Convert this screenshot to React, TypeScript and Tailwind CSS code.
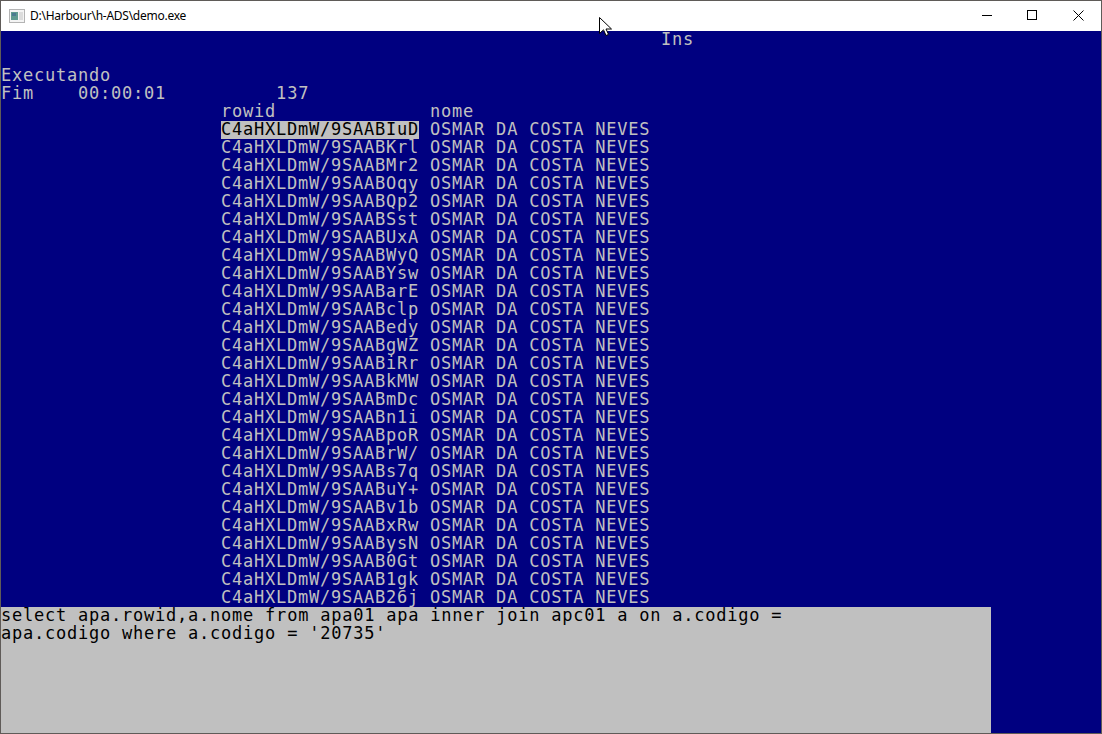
const rowIds = [
  'C4aHXLDmW/9SAABIuD',
  'C4aHXLDmW/9SAABKrl',
  'C4aHXLDmW/9SAABMr2',
  'C4aHXLDmW/9SAABOqy',
  'C4aHXLDmW/9SAABQp2',
  'C4aHXLDmW/9SAABSst',
  'C4aHXLDmW/9SAABUxA',
  'C4aHXLDmW/9SAABWyQ',
  'C4aHXLDmW/9SAABYsw',
  'C4aHXLDmW/9SAABarE',
  'C4aHXLDmW/9SAABclp',
  'C4aHXLDmW/9SAABedy',
  'C4aHXLDmW/9SAABgWZ',
  'C4aHXLDmW/9SAABiRr',
  'C4aHXLDmW/9SAABkMW',
  'C4aHXLDmW/9SAABmDc',
  'C4aHXLDmW/9SAABn1i',
  'C4aHXLDmW/9SAABpoR',
  'C4aHXLDmW/9SAABrW/',
  'C4aHXLDmW/9SAABs7q',
  'C4aHXLDmW/9SAABuY+',
  'C4aHXLDmW/9SAABv1b',
  'C4aHXLDmW/9SAABxRw',
  'C4aHXLDmW/9SAABysN',
  'C4aHXLDmW/9SAAB0Gt',
  'C4aHXLDmW/9SAAB1gk',
  'C4aHXLDmW/9SAAB26j',
];

function TitleBar() {
  return (
    <div className="flex h-[30px] items-center bg-white pl-[8px] text-black">
      <svg width="16" height="14" viewBox="0 0 16 14" className="mr-[5px]">
        <rect x="0.5" y="0.5" width="15" height="13" fill="#f4f4f4" stroke="#b4b4b4" />
        <rect x="2" y="3" width="7" height="8" fill="#5f9a90" />
        <rect x="3" y="4" width="4" height="3" fill="#4a7a90" />
        <rect x="10" y="3" width="4" height="8" fill="#dcdcdc" />
      </svg>
      <span className="font-['Noto_Sans',sans-serif] text-[12px] tracking-[-0.26px]">D:\Harbour\h-ADS\demo.exe</span>
      <div className="ml-auto flex h-full pb-[2px]">
        <button className="flex w-[44px] items-center justify-center">
          <svg width="10" height="10" viewBox="0 0 10 10"><path d="M0 5.5h10" stroke="#000" fill="none" /></svg>
        </button>
        <button className="flex w-[46px] items-center justify-center">
          <svg width="10" height="10" viewBox="0 0 10 10"><rect x="0.5" y="0.5" width="9" height="9" stroke="#000" fill="none" /></svg>
        </button>
        <button className="flex w-[46px] items-center justify-center">
          <svg width="11" height="11" viewBox="0 0 11 11"><path d="M0.5 0.5l10 10M10.5 0.5l-10 10" stroke="#000" fill="none" /></svg>
        </button>
      </div>
    </div>
  );
}

export default function App() {
  return (
    <div className="relative h-[734px] w-[1102px] overflow-hidden border border-[#5f5b58]">
      <TitleBar />

      {/* console buffer: fixed 11x18 character cells */}
      <div className="flex h-[702px] flex-col whitespace-pre bg-[#000080] font-['DejaVu_Sans_Mono',monospace] text-[17px] leading-[16px] tracking-[0.77px] text-[#c0c0c0]">
        <div className="h-[18px] shrink-0 pl-[660px]">Ins</div>
        <div className="h-[18px] shrink-0" />
        <div className="h-[18px] shrink-0">Executando</div>
        <div className="h-[18px] shrink-0">{'Fim    00:00:01          137'}</div>
        <div className="h-[18px] shrink-0 pl-[220px]">{'rowid              nome'}</div>
        {rowIds.map((id, i) => (
          <div key={id} className="flex h-[18px] shrink-0 pl-[220px]">
            <span className={i === 0 ? 'bg-[#c0c0c0] text-black' : ''}>{id}</span>
            <span className="pl-[11px]">OSMAR DA COSTA NEVES</span>
          </div>
        ))}
        <div className="h-[126px] w-[990px] shrink-0 bg-[#c0c0c0] text-black">
          <div className="h-[18px]">select apa.rowid,a.nome from apa01 apa inner join apc01 a on a.codigo =</div>
          <div className="h-[18px]">apa.codigo where a.codigo = '20735'</div>
        </div>
      </div>

      {/* mouse pointer sitting over the title bar */}
      <svg width="14" height="20" viewBox="0 0 14 20" className="absolute left-[598px] top-[16px]">
        <path d="M0.5 0.5V16.5L4.5 12.8L7 18.5L9.5 17.4L7 12H12.5Z" fill="#fff" stroke="#000" />
      </svg>
    </div>
  );
}
